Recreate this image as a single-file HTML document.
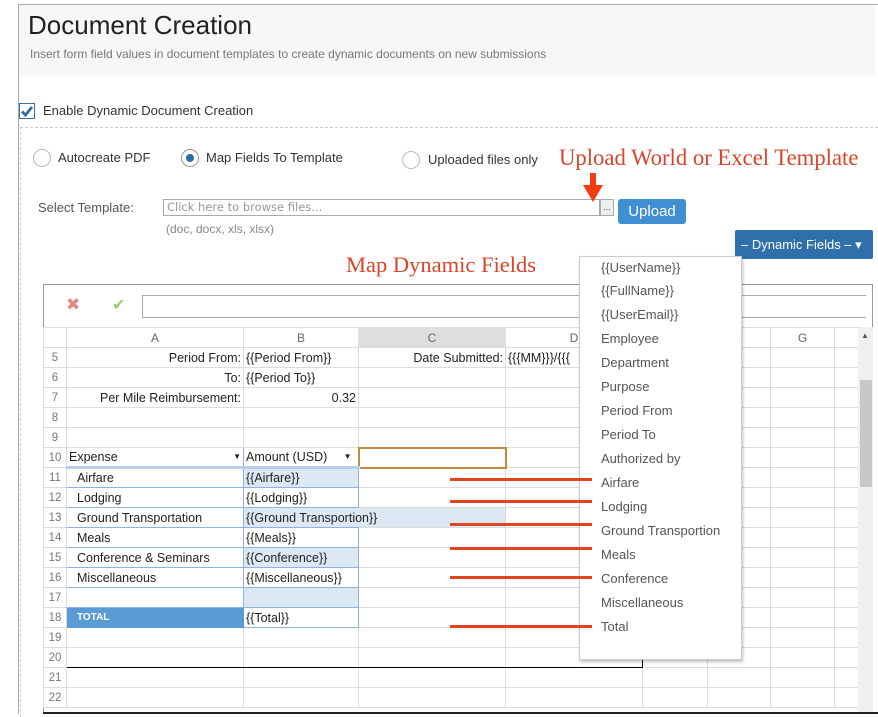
<!DOCTYPE html>
<html><head><meta charset="utf-8"><style>
*{box-sizing:border-box;margin:0;padding:0}
body{width:878px;height:714px;overflow:hidden;background:#fff;font-family:"Liberation Sans",sans-serif;position:relative;color:#333}
.a{position:absolute;white-space:nowrap}
.red{color:#d9442a;font-family:"Liberation Serif",serif}
.radio{position:absolute;width:18px;height:18px;border:1px solid #bbb;border-radius:50%;background:#fff}
.grid{position:absolute;left:43px;top:327px;width:815px;border-collapse:collapse;table-layout:fixed;font-family:"Liberation Sans",sans-serif;font-size:12.5px;color:#222}
.grid td{height:20px;border:1px solid #dcdcdc;padding:0 2px;overflow:hidden;white-space:nowrap;line-height:18px}
.grid td.rh{color:#777;text-align:center;font-size:11.5px;padding:0}
.grid tr.h td{color:#666;text-align:center;font-size:12px}
.r{text-align:right}
.tb{border-bottom:1px solid #8db3e2!important;border-left:1px solid #8db3e2!important;border-right:1px solid #8db3e2!important}
.lb{background:#dde8f5}
.rl{position:absolute;left:450px;width:142px;height:3px;background:#e0461e;z-index:5}
.dd div{height:24px;line-height:24px;padding-left:21px;font-size:13px;color:#555}
</style></head><body>
<div class="a" style="left:18px;top:4px;width:860px;height:710px;border-left:1px solid #aaa;border-top:1px solid #aaa"></div>
<div class="a" style="left:19px;top:5px;width:856px;height:71px;background:#f7f7f7"></div>
<div class="a" style="left:28px;top:10px;font-size:26px;color:#222">Document Creation</div>
<div class="a" style="left:30px;top:47px;font-size:12px;color:#777">Insert form field values in document templates to create dynamic documents on new submissions</div>
<div class="a" style="left:19px;top:103px;width:16px;height:16px;border:1px solid #3a6fa0;background:#fff"><svg width="14" height="14" viewBox="0 0 14 14"><path d="M2 7.5 L5.5 11 L12 3" stroke="#2c6ea8" stroke-width="2.8" fill="none"/></svg></div>
<div class="a" style="left:43px;top:103px;font-size:13px;color:#333">Enable Dynamic Document Creation</div>
<div class="a" style="left:20px;top:127px;width:858px;border-top:1px dashed #ccc"></div>
<div class="a" style="left:20px;top:127px;height:590px;border-left:1px dashed #ccc"></div>
<div class="radio" style="left:33px;top:149px"></div>
<div class="a" style="left:58px;top:150px;font-size:13px">Autocreate PDF</div>
<div class="radio" style="left:181px;top:149px;border-color:#999"><div style="position:absolute;left:4px;top:4px;width:8px;height:8px;border-radius:50%;background:#2c6ea8"></div></div>
<div class="a" style="left:206px;top:150px;font-size:13px">Map Fields To Template</div>
<div class="radio" style="left:402px;top:151px"></div>
<div class="a" style="left:428px;top:152px;font-size:13px">Uploaded files only</div>
<div class="a red" style="left:559px;top:145px;font-size:22.7px">Upload World or Excel Template</div>
<div class="a" style="left:38px;top:200px;font-size:13px;color:#555">Select Template:</div>
<div class="a" style="left:163px;top:199px;width:437px;height:17px;border:1px solid #aaa;font-family:'DejaVu Sans',sans-serif;font-size:11.5px;color:#999;padding-left:3px;line-height:15px">Click here to browse files...</div>
<div class="a" style="left:600px;top:199px;width:14px;height:17px;border:1px solid #aaa;background:#eee;font-size:9px;text-align:center;line-height:14px">...</div>
<div class="a" style="left:166px;top:222px;font-size:12px;color:#888">(doc, docx, xls, xlsx)</div>
<svg class="a" style="left:582px;top:173px" width="22" height="30"><rect x="8" y="0" width="6" height="14" fill="#f03c10"/><path d="M1 12 L21 12 L11 29 Z" fill="#f03c10"/></svg>
<div class="a" style="left:618px;top:199px;width:68px;height:25px;background:#3f8fd2;border-radius:3px;color:#fff;font-size:15px;text-align:center;line-height:25px">Upload</div>
<div class="a" style="left:735px;top:230px;width:138px;height:29px;background:#2e6fac;border-radius:2px;color:#fff;font-size:13px;line-height:29px;padding-left:6px">– Dynamic Fields – ▾</div>
<div class="a red" style="left:346px;top:252px;font-size:22.5px">Map Dynamic Fields</div>

<div class="a" style="left:43px;top:284px;width:830px;height:430px;border:1px solid #999"></div>
<div class="a" style="left:66px;top:295px;font-size:17px;color:#e08a8a">✖</div>
<div class="a" style="left:112px;top:295px;font-size:16px;color:#9c6">✔</div>
<div class="a" style="left:142px;top:295px;width:724px;height:23px;border:1px solid #aaa;border-right:none"></div>

<table class="grid">
<colgroup><col style="width:23px"><col style="width:177px"><col style="width:115px"><col style="width:147px"><col style="width:137px"><col style="width:65px"><col style="width:63px"><col style="width:64px"><col style="width:24px"></colgroup>
<tr class="h"><td class="rh"></td><td>A</td><td>B</td><td style="background:#dedede">C</td><td>D</td><td>E</td><td>F</td><td>G</td><td></td></tr>
<tr><td class="rh">5</td><td class="r">Period From:</td><td>{{Period From}}</td><td class="r">Date Submitted:</td><td>{{{MM}}}/{{{</td><td></td><td></td><td></td><td></td></tr>
<tr><td class="rh">6</td><td class="r">To:</td><td>{{Period To}}</td><td></td><td></td><td></td><td></td><td></td><td></td></tr>
<tr><td class="rh">7</td><td class="r">Per Mile Reimbursement:</td><td class="r">0.32</td><td></td><td></td><td></td><td></td><td></td><td></td></tr>
<tr><td class="rh">8</td><td></td><td></td><td></td><td></td><td></td><td></td><td></td><td></td></tr>
<tr><td class="rh">9</td><td></td><td></td><td></td><td></td><td></td><td></td><td></td><td></td></tr>
<tr><td class="rh">10</td><td class="tb" style="border-top:1px solid #8db3e2;border-bottom:3px solid #b8d0ea!important">Expense<span style="float:right;font-size:8px">▼</span></td><td class="tb" style="border-top:1px solid #8db3e2;border-bottom:3px solid #b8d0ea!important">Amount (USD)<span style="float:right;font-size:8px;margin-right:4px">▼</span></td><td style="border:2px solid #c08a40"></td><td></td><td></td><td></td><td></td><td></td></tr>
<tr><td class="rh">11</td><td class="tb" style="padding-left:10px">Airfare</td><td class="tb lb">{{Airfare}}</td><td></td><td></td><td></td><td></td><td></td><td></td></tr>
<tr><td class="rh">12</td><td class="tb" style="padding-left:10px">Lodging</td><td class="tb">{{Lodging}}</td><td></td><td></td><td></td><td></td><td></td><td></td></tr>
<tr><td class="rh">13</td><td class="tb" style="padding-left:10px">Ground Transportation</td><td class="tb lb" style="overflow:visible;border-right:none!important">{{Ground Transportion}}</td><td class="lb" style="border-left:none"></td><td></td><td></td><td></td><td></td><td></td></tr>
<tr><td class="rh">14</td><td class="tb" style="padding-left:10px">Meals</td><td class="tb">{{Meals}}</td><td></td><td></td><td></td><td></td><td></td><td></td></tr>
<tr><td class="rh">15</td><td class="tb" style="padding-left:10px">Conference &amp; Seminars</td><td class="tb lb">{{Conference}}</td><td></td><td></td><td></td><td></td><td></td><td></td></tr>
<tr><td class="rh">16</td><td class="tb" style="padding-left:10px">Miscellaneous</td><td class="tb">{{Miscellaneous}}</td><td></td><td></td><td></td><td></td><td></td><td></td></tr>
<tr><td class="rh">17</td><td class="tb"></td><td class="tb lb"></td><td></td><td></td><td></td><td></td><td></td><td></td></tr>
<tr><td class="rh">18</td><td style="background:#5b9bd5;color:#fff;font-weight:bold;font-size:10px;padding-left:10px;border-color:#5b9bd5">TOTAL</td><td class="tb" style="border-top:1px solid #8db3e2">{{Total}}</td><td></td><td></td><td></td><td></td><td></td><td></td></tr>
<tr><td class="rh">19</td><td></td><td></td><td></td><td></td><td></td><td></td><td></td><td></td></tr>
<tr><td class="rh">20</td><td style="border-bottom:1px solid #000"></td><td style="border-bottom:1px solid #000"></td><td style="border-bottom:1px solid #000"></td><td style="border-bottom:1px solid #000;border-right:1px solid #000"></td><td></td><td></td><td></td><td></td></tr>
<tr><td class="rh">21</td><td></td><td></td><td></td><td></td><td></td><td></td><td></td><td></td></tr>
<tr><td class="rh">22</td><td></td><td></td><td></td><td></td><td></td><td></td><td></td><td></td></tr>
</table>
<div class="a" style="left:858px;top:327px;width:15px;height:386px;background:#f0f0f0"></div>
<div class="a" style="left:861px;top:331px;font-size:8px;color:#555">▲</div>
<div class="a" style="left:860px;top:380px;width:12px;height:107px;background:#c8c8c8"></div>
<div class="a" style="left:43px;top:712px;width:835px;height:2px;background:#222"></div>

<div class="rl" style="top:478px"></div>
<div class="rl" style="top:500px"></div>
<div class="rl" style="top:523px"></div>
<div class="rl" style="top:547px"></div>
<div class="rl" style="top:576px"></div>
<div class="rl" style="top:625px"></div>

<div class="a dd" style="left:579px;top:256px;width:163px;height:404px;background:#fff;border:1px solid #ccc;box-shadow:1px 2px 3px rgba(0,0,0,.25);overflow:hidden">
<div style="margin-top:-1px;height:23px">{{UserName}}</div><div>{{FullName}}</div><div>{{UserEmail}}</div><div>Employee</div><div>Department</div><div>Purpose</div><div>Period From</div><div>Period To</div><div>Authorized by</div><div>Airfare</div><div>Lodging</div><div>Ground Transportion</div><div>Meals</div><div>Conference</div><div>Miscellaneous</div><div>Total</div>
</div>
</body></html>
